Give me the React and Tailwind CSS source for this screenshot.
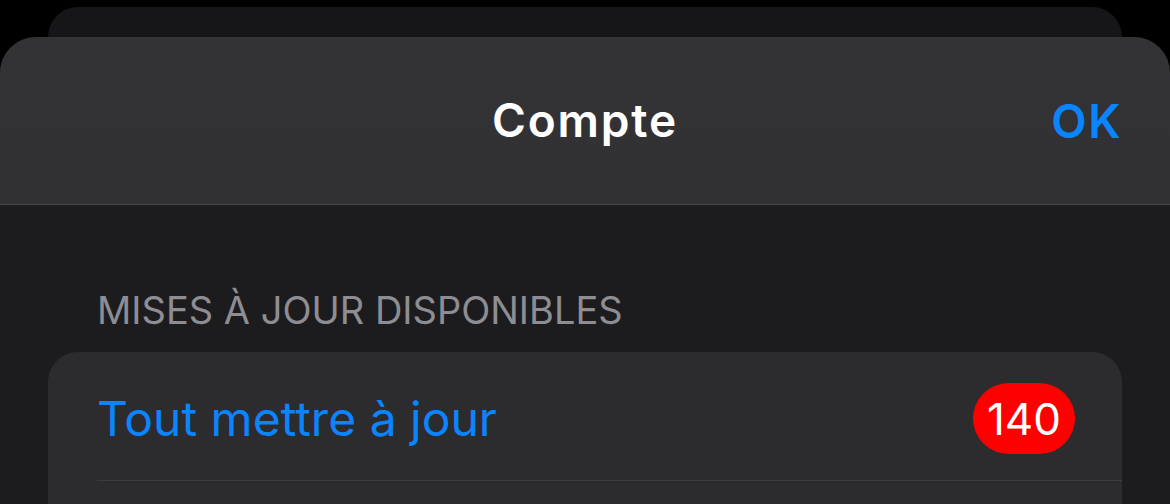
export default function App() {
  return (
    <div
      className="w-[1170px] h-[504px] overflow-hidden bg-black"
      style={{ fontFamily: 'Inter, "Noto Sans", sans-serif' }}
    >
      {/* sheet behind */}
      <div className="mx-[48px] mt-[7px] h-[30px] rounded-t-[30px] bg-[#161618]" />

      {/* front sheet */}
      <div className="rounded-t-[36px] bg-[#1c1c1e] h-[467px] overflow-hidden">
        <div className="relative h-[168px] flex items-center justify-center bg-gradient-to-b from-[#333335] to-[#313133] border-b border-[#46464a]">
          <span className="text-white text-[46px] font-semibold tracking-[1.8px]">Compte</span>
          <span className="absolute right-[48px] top-1/2 -translate-y-1/2 text-[#0a84ff] text-[46px] font-semibold tracking-[1.5px]">
            OK
          </span>
        </div>

        <div className="pt-[82px] px-[48px]">
          <div className="pl-[49px] text-[38px] leading-[46px] text-[#8d8d93] uppercase mb-[19px]">
            Mises à jour disponibles
          </div>

          <div className="rounded-t-[30px] bg-[#2c2c2e] pl-[49px]">
            <div className="h-[129px] pt-[5px] flex items-center justify-between pr-[47px] border-b border-[#3d3d41]">
              <span className="text-[#0a84ff] text-[48px]">Tout mettre à jour</span>
              <span className="h-[71px] w-[102px] rounded-full bg-[#ff0000] text-white text-[44px] flex items-center justify-center">
                140
              </span>
            </div>
            <div className="h-[40px]" />
          </div>
        </div>
      </div>
    </div>
  );
}
